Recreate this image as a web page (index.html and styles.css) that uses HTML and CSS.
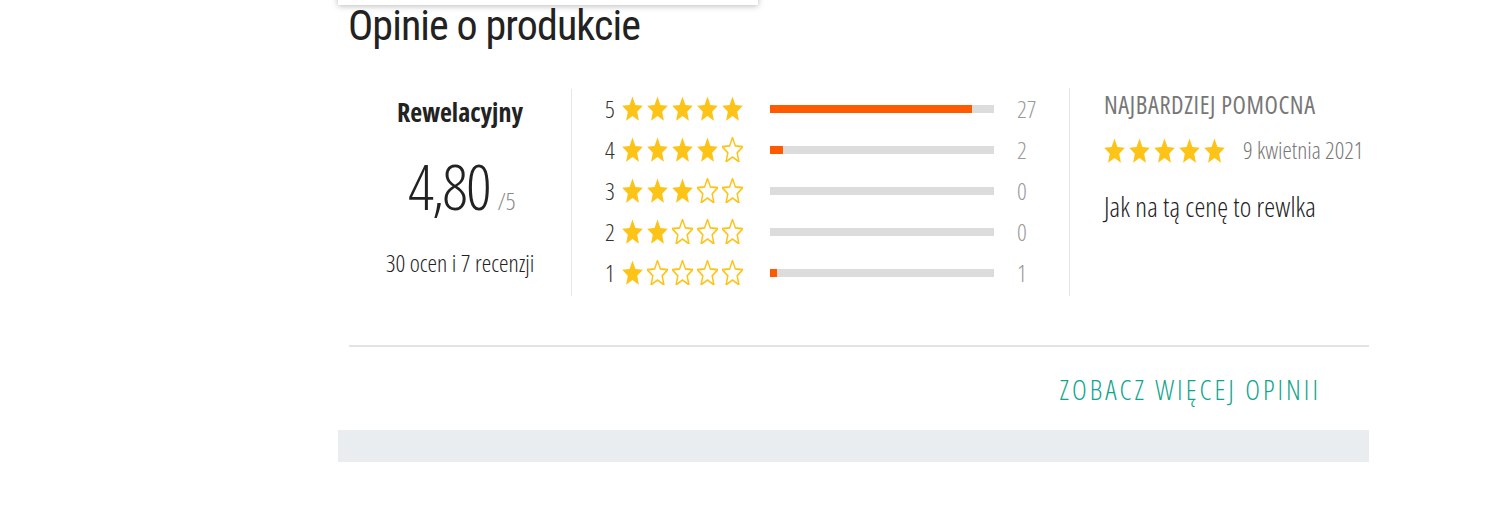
FILE: index.html
```html
<!DOCTYPE html>
<html lang="pl">
<head>
<meta charset="utf-8">
<title>Opinie o produkcie</title>
<link rel="stylesheet" href="styles.css">
</head>
<body>
<svg width="0" height="0" class="defs">
  <defs>
    <symbol id="star" viewBox="1.2 1.4 21.6 20.8" preserveAspectRatio="none"><path d="M12 1.8l3 7.1 7.6.6-5.8 5 1.8 7.5L12 18l-6.6 4 1.8-7.5-5.8-5 7.6-.6z"/></symbol>
  </defs>
</svg>
<div class="page">
  <div class="topbar"></div>
  <h1 class="title">Opinie o produkcie</h1>
  <section class="summary">
    <div class="score">
      <div class="score-label">Rewelacyjny</div>
      <div class="score-value"><span class="big">4,80</span><span class="max">/5</span></div>
      <div class="score-count">30 ocen i 7 recenzji</div>
    </div>
    <div class="dist">
      <div class="row"><span class="num">5</span><span class="stars"><svg class="s f"><use href="#star"/></svg><svg class="s f"><use href="#star"/></svg><svg class="s f"><use href="#star"/></svg><svg class="s f"><use href="#star"/></svg><svg class="s f"><use href="#star"/></svg></span><span class="bar"><span class="fill" style="width:90%"></span></span><span class="cnt">27</span></div>
      <div class="row"><span class="num">4</span><span class="stars"><svg class="s f"><use href="#star"/></svg><svg class="s f"><use href="#star"/></svg><svg class="s f"><use href="#star"/></svg><svg class="s f"><use href="#star"/></svg><svg class="s e"><use href="#star"/></svg></span><span class="bar"><span class="fill" style="width:6%"></span></span><span class="cnt">2</span></div>
      <div class="row"><span class="num">3</span><span class="stars"><svg class="s f"><use href="#star"/></svg><svg class="s f"><use href="#star"/></svg><svg class="s f"><use href="#star"/></svg><svg class="s e"><use href="#star"/></svg><svg class="s e"><use href="#star"/></svg></span><span class="bar"><span class="fill" style="width:0%"></span></span><span class="cnt">0</span></div>
      <div class="row"><span class="num">2</span><span class="stars"><svg class="s f"><use href="#star"/></svg><svg class="s f"><use href="#star"/></svg><svg class="s e"><use href="#star"/></svg><svg class="s e"><use href="#star"/></svg><svg class="s e"><use href="#star"/></svg></span><span class="bar"><span class="fill" style="width:0%"></span></span><span class="cnt">0</span></div>
      <div class="row"><span class="num">1</span><span class="stars"><svg class="s f"><use href="#star"/></svg><svg class="s e"><use href="#star"/></svg><svg class="s e"><use href="#star"/></svg><svg class="s e"><use href="#star"/></svg><svg class="s e"><use href="#star"/></svg></span><span class="bar"><span class="fill" style="width:3.3%"></span></span><span class="cnt">1</span></div>
    </div>
    <div class="helpful">
      <div class="helpful-title">NAJBARDZIEJ POMOCNA</div>
      <div class="helpful-meta"><span class="stars"><svg class="s f"><use href="#star"/></svg><svg class="s f"><use href="#star"/></svg><svg class="s f"><use href="#star"/></svg><svg class="s f"><use href="#star"/></svg><svg class="s f"><use href="#star"/></svg></span><span class="date">9 kwietnia 2021</span></div>
      <p class="helpful-text">Jak na tą cenę to rewlka</p>
    </div>
  </section>
  <div class="more-wrap"><a class="more" href="#">ZOBACZ WIĘCEJ OPINII</a></div>
  <div class="band"></div>
</div>
</body>
</html>
```
FILE: styles.css
```css
html, body { margin: 0; padding: 0; background: #fff; }
body { font-family: "Open Sans", "DejaVu Sans", sans-serif; font-stretch: 75%; color: #222; overflow: hidden; }
.defs { position: absolute; width: 0; height: 0; }
.page { position: relative; width: 1031px; margin-left: 338px; }
.topbar { position: absolute; left: 0; top: -20px; width: 420px; height: 20px; background: #fff; box-shadow: 0 1px 6px rgba(0,0,0,0.28); }
.title { margin: 5px 0 0 10px; font-family: Roboto, "Open Sans", sans-serif; font-stretch: 75%; font-weight: 400; font-size: 42px; line-height: 42px; letter-spacing: -0.9px; color: #222; }
.summary { display: flex; margin: 42px 0 0 11px; height: 207px; }
.score { width: 222px; border-right: 1px solid #e6e6e6; display: flex; flex-direction: column; align-items: center; }
.score-label { font-weight: 700; font-size: 26px; line-height: 30px; margin-top: 8px; color: #222; }
.score-value { margin-top: 27px; margin-left: 4px; display: flex; align-items: baseline; }
.big { font-size: 63px; font-weight: 300; line-height: 64px; letter-spacing: -2px; color: #222; }
.max { font-size: 24px; font-weight: 300; color: #888; margin-left: 8px; }
.score-count { margin-top: 31px; font-size: 24px; font-weight: 300; line-height: 28px; color: #222; }
.dist { width: 498px; border-right: 1px solid #e6e6e6; padding-left: 33px; box-sizing: border-box; margin-top: -1px; }
.row { height: 41px; display: flex; align-items: center; }
.num { width: 17px; font-size: 24px; font-weight: 300; color: #333; line-height: 28px; }
.stars { display: flex; gap: 4px; }
.s { width: 21px; height: 25px; display: block; overflow: visible; }
.s.f { fill: #fdc316; }
.s.e { fill: #fff; stroke: #fdc316; stroke-width: 1.5; vector-effect: non-scaling-stroke; }
.bar { width: 224px; height: 8px; background: #dcdcdc; margin-left: 27px; display: block; }
.fill { display: block; height: 100%; background: #ff5a00; }
.cnt { margin-left: 23px; font-size: 24px; font-weight: 300; color: #999; line-height: 28px; }
.helpful { padding-left: 34px; flex: 1; }
.helpful-title { font-size: 24.5px; font-weight: 500; color: #777; line-height: 30px; margin-top: 1px; letter-spacing: 0.6px; }
.helpful-meta { display: flex; align-items: center; margin-top: 14px; }
.helpful-meta .date { margin-left: 18px; font-size: 23.5px; color: #777; font-weight: 300; }
.helpful-text { margin: 26px 0 0; font-size: 27.5px; font-weight: 300; line-height: 30px; letter-spacing: 0.1px; color: #222; }
.more-wrap { margin: 49px 0 0 11px; border-top: 2px solid #e3e3e3; padding: 25px 48px 24px 0; text-align: right; }
.more { font-size: 28px; font-weight: 300; letter-spacing: 3px; color: #0fa58e; text-decoration: none; line-height: 34px; }
.band { height: 32px; background: #eaedf0; }
```
